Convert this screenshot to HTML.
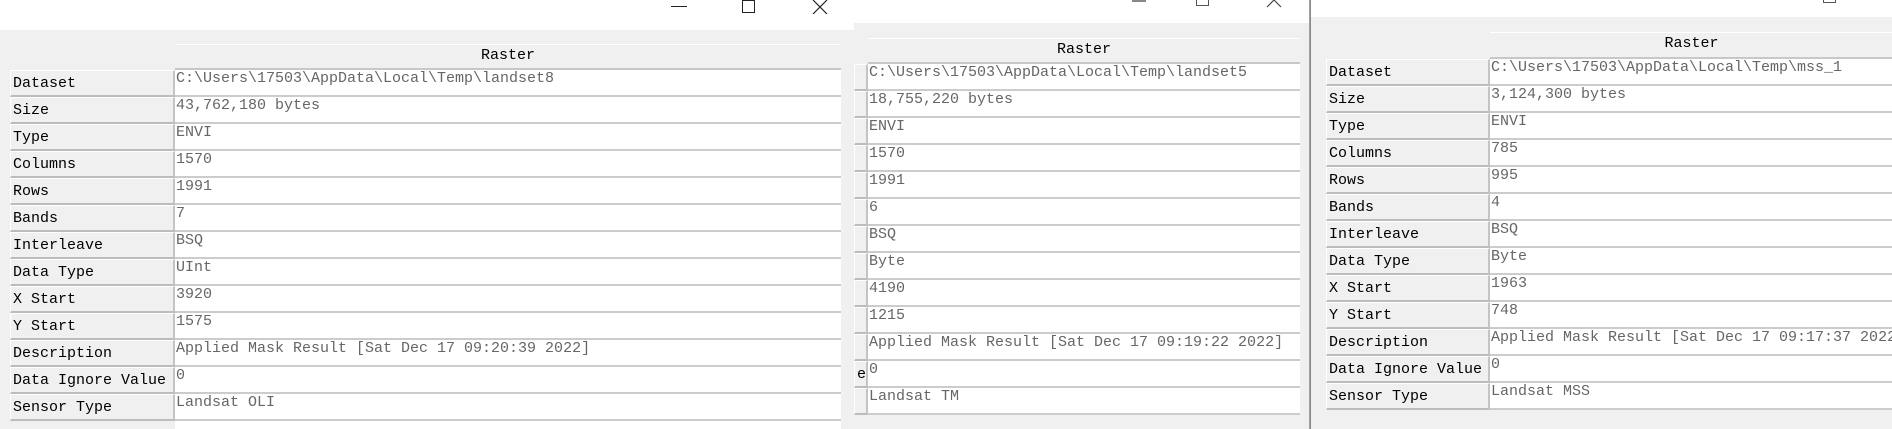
<!DOCTYPE html>
<html><head><meta charset="utf-8"><style>
*{margin:0;padding:0;box-sizing:border-box}
body{width:1892px;height:429px;overflow:hidden;background:#f0f0f0;position:relative;font-family:"Liberation Mono","Noto Sans CJK SC",monospace;font-size:15px}
.win{position:absolute;top:0;bottom:0;overflow:hidden;background:#f0f0f0}
.tb{position:absolute;left:0;right:0;top:0;background:#fff}
.hd{position:absolute;background:#f0f0f0;border-top:1px solid #fff;border-bottom:2px solid #c8c8c8;text-align:center;color:#000;line-height:22px;font-size:15px}
.lb{position:absolute;background:#f0f0f0;border-top:1px solid #fff;border-left:1px solid #fff;border-right:2px solid #c4c4c4;border-bottom:2px solid #bcbcbc;color:#000;height:27px;line-height:25px;padding-left:2px;white-space:nowrap;overflow:hidden}
.vl{position:absolute;background:#fff;border-bottom:2px solid #cccccc;color:#666;height:27px;line-height:18px;padding-left:1px;white-space:nowrap;overflow:hidden}
.ctl{position:absolute;color:#222;font-family:"DejaVu Sans",sans-serif}
</style></head><body>

<!-- window 1 -->
<div class="win" style="left:0;width:854px;background:#f0f0f0">
<div class="tb" style="height:30px"></div>
<div class="ctl" style="left:671px;top:6px;width:16px;height:1px;background:#222"></div>
<div class="ctl" style="left:742px;top:0px;width:13px;height:13px;border:1px solid #222"></div>
<svg class="ctl" style="left:812px;top:0" width="16" height="14"><path d="M1 0L15 14M15 0L1 14" stroke="#222" stroke-width="1.2"/></svg>
<div class="hd" style="left:175px;top:44px;width:666px;height:26px">Raster</div>
<div id="p1"></div>
<div style="position:absolute;left:175px;top:421px;width:666px;height:8px;background:#fff"></div>
</div>

<!-- window 2 -->
<div class="win" style="left:854px;width:456px;border-right:1px solid #a0a0a0">
<div class="tb" style="height:23px"></div>
<div class="ctl" style="left:278px;top:0;width:14px;height:2px;background:#888"></div>
<div class="ctl" style="left:342px;top:-4px;width:13px;height:10px;border:1px solid #555"></div>
<svg class="ctl" style="left:412px;top:0" width="16" height="8"><path d="M1 7L8 0L15 7" stroke="#444" stroke-width="1.2" fill="none"/></svg>
<div class="hd" style="left:14px;top:38px;width:432px;height:26px">Raster</div>
<div id="p2"></div>
</div>

<!-- window 3 -->
<div class="win" style="left:1310px;width:582px;border-left:1px solid #8a8a8a">
<div class="tb" style="height:17px"></div>
<div class="ctl" style="left:512px;top:-6px;width:13px;height:9px;border:1px solid #555"></div>
<div class="hd" style="left:179px;top:32px;width:403px;height:27px">Raster</div>
<div id="p3"></div>
</div>

<script>
var L=["Dataset","Size","Type","Columns","Rows","Bands","Interleave","Data Type","X Start","Y Start","Description","Data Ignore Value","Sensor Type"];
var V1=["C:\\Users\\17503\\AppData\\Local\\Temp\\landset8","43,762,180 bytes","ENVI","1570","1991","7","BSQ","UInt","3920","1575","Applied Mask Result [Sat Dec 17 09:20:39 2022]","0","Landsat OLI"];
var V2=["C:\\Users\\17503\\AppData\\Local\\Temp\\landset5","18,755,220 bytes","ENVI","1570","1991","6","BSQ","Byte","4190","1215","Applied Mask Result [Sat Dec 17 09:19:22 2022]","0","Landsat TM"];
var V3=["C:\\Users\\17503\\AppData\\Local\\Temp\\mss_1","3,124,300 bytes","ENVI","785","995","4","BSQ","Byte","1963","748","Applied Mask Result [Sat Dec 17 09:17:37 2022]","0","Landsat MSS"];
function build(id,V,lx,lw,vx,vw,top,lab){var h="";for(var i=0;i<13;i++){var y=top+i*27;
h+='<div class="lb" style="left:'+lx+'px;top:'+y+'px;width:'+lw+'px;'+(lab?'':'padding-left:0;text-align:right;')+'">'+(lab?L[i]:(i==11?'e':''))+'</div>';
h+='<div class="vl" style="left:'+vx+'px;top:'+y+'px;width:'+vw+'px">'+V[i]+'</div>';}
document.getElementById(id).innerHTML=h;}
build("p1",V1,10,165,175,666,70,true);
build("p2",V2,0,14,14,432,64,false);
build("p3",V3,15,164,179,403,59,true);
</script>
</body></html>
